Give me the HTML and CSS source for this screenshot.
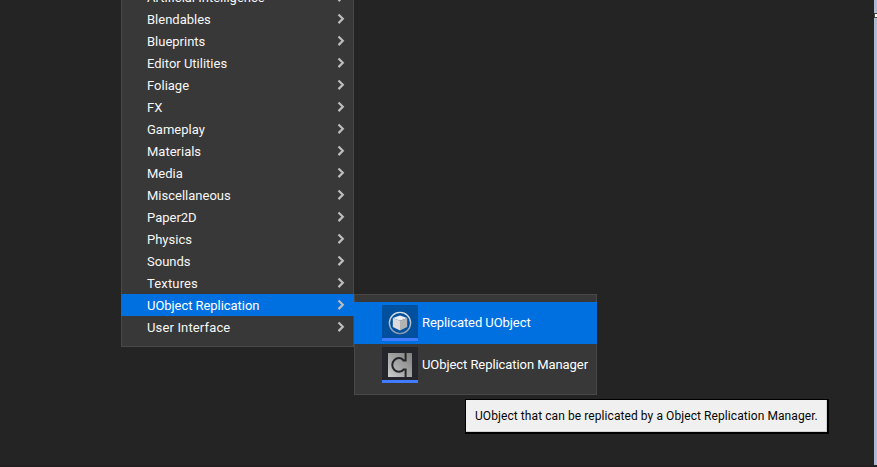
FILE: index.html
```html
<!DOCTYPE html>
<html lang="en">
<head>
<meta charset="utf-8">
<title>Content Browser</title>
<link rel="stylesheet" href="styles.css">
</head>
<body>
<svg width="0" height="0" class="defs"><defs><symbol id="chev" viewBox="0 0 8 12"><path d="M1.5 1.5 L5.8 5.8 L1.5 10.1" fill="none" stroke="#bdbdbd" stroke-width="2.2"/></symbol></defs></svg>
<main class="editor">
  <ul class="menu">
    <li><span>Artificial Intelligence</span><svg><use href="#chev"/></svg></li>
    <li><span>Blendables</span><svg><use href="#chev"/></svg></li>
    <li><span>Blueprints</span><svg><use href="#chev"/></svg></li>
    <li><span>Editor Utilities</span><svg><use href="#chev"/></svg></li>
    <li><span>Foliage</span><svg><use href="#chev"/></svg></li>
    <li><span>FX</span><svg><use href="#chev"/></svg></li>
    <li><span>Gameplay</span><svg><use href="#chev"/></svg></li>
    <li><span>Materials</span><svg><use href="#chev"/></svg></li>
    <li><span>Media</span><svg><use href="#chev"/></svg></li>
    <li><span>Miscellaneous</span><svg><use href="#chev"/></svg></li>
    <li><span>Paper2D</span><svg><use href="#chev"/></svg></li>
    <li><span>Physics</span><svg><use href="#chev"/></svg></li>
    <li><span>Sounds</span><svg><use href="#chev"/></svg></li>
    <li class="wide"><span>Textures</span><svg><use href="#chev"/></svg></li>
    <li class="active"><span>UObject Replication</span><svg><use href="#chev"/></svg></li>
    <li class="wide"><span>User Interface</span><svg><use href="#chev"/></svg></li>
  </ul>
  <div class="submenu">
    <div class="asset active">
      <div class="thumb">
        <svg viewBox="0 0 36 33">
          <defs><linearGradient id="ring" x2="0" y2="1"><stop stop-color="#e2e5e8"/><stop offset="1" stop-color="#8d9aab"/></linearGradient></defs>
          <circle cx="18" cy="18" r="10.6" fill="none" stroke="url(#ring)" stroke-width="1.4"/>
          <path d="M18 10.5 L25.2 13.1 L18 15.8 L10.8 13.1Z" fill="#eeeeee"/>
          <path d="M10.8 13.1 L18 15.8 V25.5 L10.8 22Z" fill="#dcdcdc"/>
          <path d="M25.2 13.1 L18 15.8 V25.5 L25.2 22Z" fill="#b3b3b3"/>
        </svg>
      </div>
      <span>Replicated UObject</span>
    </div>
    <div class="asset">
      <div class="thumb">
        <svg viewBox="0 0 36 33">
          <defs><linearGradient id="metal" x1="1" x2="0" y2="1"><stop stop-color="#808080"/><stop offset=".5" stop-color="#a2a2a2"/><stop offset="1" stop-color="#cccccc"/></linearGradient></defs>
          <rect x="6" y="6" width="24" height="24" fill="url(#metal)"/>
          <path d="M23.6 6 V13.4 H21.5 C19.5 10.5 15 10.3 12.4 13 C9.6 15.8 9.6 20.3 12.4 23 C15 25.6 19.5 25.2 21.5 22.6 H23.6 V30" fill="none" stroke="#25262b" stroke-width="2"/>
        </svg>
      </div>
      <span>UObject Replication Manager</span>
    </div>
  </div>
  <div class="tooltip">UObject that can be replicated by a Object Replication Manager.</div>
  <div class="edge"><i></i></div>
</main>
</body>
</html>
```

FILE: styles.css
```css
* { box-sizing: border-box; }
body { margin: 0; background: #242424; font: 13px/22px Roboto, sans-serif; color: #fff; overflow: hidden; }
.defs { position: absolute; }
.editor { position: relative; height: 467px; overflow: hidden; border-bottom: 2px solid #241f20; }
.menu { position: absolute; left: 121px; top: -23px; width: 233px; height: 370px; margin: 0; padding: 8px 0; list-style: none; background: #383838; border: 1px solid #484848; }
.menu li { display: flex; align-items: center; justify-content: space-between; height: 22px; padding: 0 8px 0 25px; color: #f7f7f7; white-space: nowrap; }
.menu span { padding-top: 2px; }
.menu svg { width: 8px; height: 12px; }
.menu .wide { letter-spacing: .15px; }
.menu li.active { margin: 0 -1px; padding: 0 9px 0 26px; background: #0070e0; color: #fff; letter-spacing: -.05px; }
.submenu { position: absolute; left: 354px; top: 294px; width: 243px; height: 101px; padding-top: 7px; background: #383838; border: 1px solid #484848; letter-spacing: -.07px; }
.asset { display: flex; align-items: center; gap: 4px; height: 42px; margin: 0 -1px; padding-left: 28px; white-space: nowrap; }
.asset:not(.active) { margin: 0; padding-left: 27px; }
.asset.active { background: #0070e0; }
.thumb { width: 36px; height: 36px; background: #25262b; border-bottom: 3px solid #407cff; }
.thumb svg { display: block; width: 36px; height: 33px; }
.active .thumb { background: #0050a0; }
.tooltip { position: absolute; left: 465px; top: 399px; width: 364px; height: 35px; border: solid #000; border-width: 1px 2px 2px 1px; background: #f0f0f0; box-shadow: inset -1px -1px #cfcfcf; color: #050505; font-size: 12px; line-height: 32px; letter-spacing: .08px; padding-left: 9px; white-space: nowrap; }
.edge { position: absolute; left: 874px; top: 0; width: 3px; height: 467px; padding-top: 13px; background: #aebbd3; }
.edge i { display: block; height: 5px; border: 1px solid #444; border-right: 0; background: #fff; }
```
